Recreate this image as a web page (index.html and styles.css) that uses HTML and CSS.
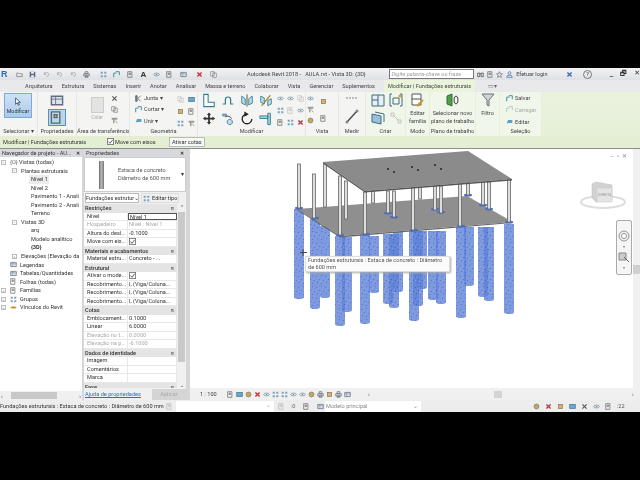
FILE: index.html
```html
<!DOCTYPE html>
<html lang="pt">
<head>
<meta charset="utf-8">
<title>Autodesk Revit 2018</title>
<link rel="stylesheet" href="styles.css">
</head>
<body>
<svg class="defs" width="0" height="0">
  <defs>
    <symbol id="s-save" viewBox="0 0 10 10"><path d="M1 1h7l1 1v7H1z" fill="#5b6a80"/><path d="M3 1h4v3H3zM3 6h4v3H3z" fill="#eef"/></symbol>
    <symbol id="s-open" viewBox="0 0 10 10"><path d="M1 3h3l1 1h4v4H1z" fill="none" stroke="#777" stroke-width="1"/></symbol>
    <symbol id="s-undo" viewBox="0 0 10 10"><path d="M2 5a3 3 0 1 1 3 3M2 2v3h3" fill="none" stroke="#a0a0a0" stroke-width="1"/></symbol>
    <symbol id="s-print" viewBox="0 0 10 10"><path d="M1 4h8v3H1zM3 1h4v3H3zM3 7h4v2H3z" fill="none" stroke="#5b6470" stroke-width="1"/></symbol>
    <symbol id="s-x" viewBox="0 0 10 10"><path d="M2 2l6 6M8 2L2 8" stroke="#555" stroke-width="1.6"/></symbol>
    <symbol id="s-xred" viewBox="0 0 10 10"><path d="M2 2l6 6M8 2L2 8" stroke="#c8303a" stroke-width="2"/></symbol>
    <symbol id="s-xblue" viewBox="0 0 10 10"><path d="M2 2l6 6M8 2L2 8" stroke="#3f6fb0" stroke-width="2"/></symbol>
    <symbol id="s-copy" viewBox="0 0 10 10"><path d="M1 1h5v6H1zM4 3h5v6H4z" fill="#fff" stroke="#777"/></symbol>
    <symbol id="s-brush" viewBox="0 0 10 10"><path d="M1 1h8v3H5v5H3V4H1z" fill="#9a9a9a"/><path d="M6 5l3 4" stroke="#b48a3c"/></symbol>
    <symbol id="s-join" viewBox="0 0 10 10"><path d="M1 1h2v8H1zM4 5l4-4M4 5l4 4" stroke="#566" fill="#789" stroke-width="1.2"/></symbol>
    <symbol id="s-cut" viewBox="0 0 10 10"><path d="M1 9V3h4M4 1h5v5" fill="none" stroke="#3f8f9c" stroke-width="1.4"/></symbol>
    <symbol id="s-unite" viewBox="0 0 10 10"><path d="M1 8l2-5h6v4H4z" fill="#57a0c8"/></symbol>
    <symbol id="s-blue" viewBox="0 0 10 10"><rect x="1" y="2" width="8" height="6" fill="#6fa6c8" stroke="#3e7696"/></symbol>
    <symbol id="s-tan" viewBox="0 0 10 10"><rect x="2" y="2" width="6" height="6" fill="#d2b27c" stroke="#8c7548"/></symbol>
    <symbol id="s-grid" viewBox="0 0 10 10"><path d="M1 1h3v3H1zM6 1h3v3H6zM1 6h3v3H1zM6 6h3v3H6z" fill="#7fa2bc"/></symbol>
    <symbol id="s-eye" viewBox="0 0 10 10"><ellipse cx="5" cy="5" rx="4" ry="2" fill="none" stroke="#6f8796"/><circle cx="5" cy="5" r="1" fill="#6f8796"/></symbol>
    <symbol id="s-align" viewBox="0 0 16 16"><path d="M2 1v14h12v-5H7V1z" fill="#fff" stroke="#2f7f93" stroke-width="1.2"/></symbol>
    <symbol id="s-off" viewBox="0 0 16 16"><path d="M2 12h3V7a3 3 0 0 1 6 0v5h3" fill="none" stroke="#2f7f93" stroke-width="1.4"/></symbol>
    <symbol id="s-mirror" viewBox="0 0 16 16"><path d="M8 1v14" stroke="#444"/><path d="M2 3l4 3v7l-4-2zM14 3l-4 3v7l4-2z" fill="#c4dde6" stroke="#2f7f93"/></symbol>
    <symbol id="s-mirror2" viewBox="0 0 16 16"><path d="M3 14L13 2" stroke="#b68a2e" stroke-width="1.4"/><path d="M2 3l4 2v7l-4-2zM14 6l-4 2v6l4-2z" fill="#c4dde6" stroke="#2f7f93"/></symbol>
    <symbol id="s-move" viewBox="0 0 16 16"><path d="M8 1l2.4 3H9v3h3V5.600L15 8l-3 2.400V9H9v3h1.400L8 15l-2.400-3H7V9H4v1.400L1 8l3-2.400V7h3V4H5.600z" fill="#333"/></symbol>
    <symbol id="s-copy2" viewBox="0 0 16 16"><path d="M2 3h4v2H2zM10 9a3 3 0 1 0 .1 0" fill="#c4dde6" stroke="#2f7f93"/><path d="M5 6a5 5 0 0 1 7 2" fill="none" stroke="#333"/></symbol>
    <symbol id="s-rot" viewBox="0 0 16 16"><path d="M8 3a5.500 5.500 0 1 0 5.500 5.500" fill="none" stroke="#222" stroke-width="1.500"/><path d="M5 0l5 3-5 3z" fill="#222"/></symbol>
    <symbol id="s-trim" viewBox="0 0 16 16"><path d="M1 5h9v3H1zM10 2h3v13h-3z" fill="#a8cfdc" stroke="#2f7f93"/></symbol>
    <symbol id="s-folder" viewBox="0 0 10 10"><path d="M1 2h8v6H1z" fill="#dfe3e8" stroke="#5f6f82"/><path d="M1 4h8M4 2v6" stroke="#5f6f82" stroke-width=".6"/></symbol>
    <symbol id="s-fam" viewBox="0 0 10 10"><path d="M1 1h6v8H1zM3 3h2v2H3z" fill="none" stroke="#666"/></symbol>
    <symbol id="s-chain" viewBox="0 0 14 10"><rect x="1" y="3" width="12" height="4" rx="2" fill="#d9a23a"/><path d="M5 5h4" stroke="#7a5b12"/></symbol>
    <symbol id="s-view" viewBox="0 0 10 10"><circle cx="5" cy="5" r="3.500" fill="#c9a850" stroke="#777"/></symbol>
    <symbol id="s-bino" viewBox="0 0 10 10"><path d="M1 8V3h3v5zM6 8V3h3v5zM4 4h2" fill="none" stroke="#444"/></symbol>
    <symbol id="s-star" viewBox="0 0 10 10"><path d="M5 1l1.200 2.800 3 .3-2.300 2 .7 3L5 7.500 2.400 9.100l.7-3-2.300-2 3-.3z" fill="none" stroke="#555" stroke-width=".8"/></symbol>
    <symbol id="s-user" viewBox="0 0 10 10"><circle cx="5" cy="3" r="2" fill="none" stroke="#3f6fb0"/><path d="M1 9a4 3 0 0 1 8 0z" fill="none" stroke="#3f6fb0"/></symbol>
    <symbol id="s-check" viewBox="0 0 8 8"><rect x=".5" y=".5" width="7" height="7" fill="#fff" stroke="#777"/><path d="M1.500 4l2 2 3-4" fill="none" stroke="#444"/></symbol>
    <pattern id="speck" width="9" height="11" patternUnits="userSpaceOnUse">
      <rect width="9" height="11" fill="#5d81d8" fill-opacity=".8"/>
      <path d="M1 2h1v1H1zM6 1h1v1H6zM4 5h1v1H4zM8 6h1v1H8zM2 8h1v1H2zM6 9h1v1H6z" fill="#2e3f74" fill-opacity=".4"/>
      <path d="M3 3h1v1H3zM7 4h1v1H7zM1 6h1v1H1zM5 7h1v1H5z" fill="#a9bdec" fill-opacity=".35"/>
    </pattern>
  </defs>
</svg>

<div class="bar-black"></div>

<div class="app">
  <header class="titlebar">
    <span class="logo">R</span>
    <div class="qat">
      <svg class="i"><use href="#s-open"/></svg>
      <svg class="i"><use href="#s-save"/></svg>
      <svg class="i"><use href="#s-undo"/></svg>
      <svg class="i"><use href="#s-undo"/></svg>
      <svg class="i"><use href="#s-undo"/></svg>
      <svg class="i"><use href="#s-print"/></svg>
      <svg class="i gap-l"><use href="#s-grid"/></svg>
      <svg class="i"><use href="#s-cut"/></svg>
      <svg class="i"><use href="#s-fam"/></svg>
      <span class="qat-a">A</span>
      <svg class="i"><use href="#s-eye"/></svg>
      <svg class="i"><use href="#s-fam"/></svg>
      <svg class="i"><use href="#s-folder"/></svg>
      <svg class="i gap-l"><use href="#s-xred"/></svg>
      <svg class="i"><use href="#s-copy"/></svg>
    </div>
    <span class="doc-title">Autodesk Revit 2018 -&nbsp;&nbsp;&nbsp;AULA.rvt - Vista 3D: {3D}</span>
    <span class="search">Digite palavra-chave ou frase</span>
    <div class="title-tools">
      <svg class="i"><use href="#s-bino"/></svg>
      <svg class="i"><use href="#s-fam"/></svg>
      <svg class="i"><use href="#s-star"/></svg>
      <svg class="i"><use href="#s-user"/></svg>
      <span class="login">Efetuar login</span>
      <svg class="i"><use href="#s-xblue"/></svg>
      <span class="help">?</span>
    </div>
    <div class="win">
      <span>_</span><span>&#x1F5D7;</span><span>&#x2715;</span>
    </div>
  </header>

  <nav class="tabs">
    <span class="tab t-arq">Arquitetura</span>
    <span class="tab">Estrutura</span>
    <span class="tab">Sistemas</span>
    <span class="tab">Inserir</span>
    <span class="tab">Anotar</span>
    <span class="tab">Analisar</span>
    <span class="tab">Massa e terreno</span>
    <span class="tab">Colaborar</span>
    <span class="tab">Vista</span>
    <span class="tab">Gerenciar</span>
    <span class="tab">Suplementos</span>
    <span class="tab active">Modificar | Fundações estruturais</span>
    <span class="tab-tool">&#x25AD;&#x25BE;</span>
  </nav>

  <section class="ribbon">
    <div class="panel w-sel">
      <div class="body"><div class="modbtn"><svg class="cursor-i" viewBox="0 0 10 12"><path d="M2 1v8l2-2 1.500 3 1.200-.6L5.200 6.500H8z" fill="#fff" stroke="#345"/></svg><span>Modificar</span></div></div>
      <div class="plabel">Selecionar ▾</div>
    </div>
    <div class="panel w-prop">
      <div class="body col"><svg class="i14"><use href="#s-folder"/></svg><div class="propbtn"><svg class="i14"><use href="#s-fam"/></svg></div></div>
      <div class="plabel">Propriedades</div>
    </div>
    <div class="panel w-clip">
      <div class="body row">
        <div class="colar"><span class="paste"></span><span>Colar</span></div>
        <div class="col3"><svg class="i"><use href="#s-x"/></svg><svg class="i"><use href="#s-copy"/></svg><svg class="i"><use href="#s-brush"/></svg></div>
      </div>
      <div class="plabel">Área de transferência</div>
    </div>
    <div class="panel w-geo">
      <div class="body row">
        <div class="col3">
          <span class="sm"><svg class="i"><use href="#s-join"/></svg>Junta ▾</span>
          <span class="sm"><svg class="i"><use href="#s-cut"/></svg>Cortar ▾</span>
          <span class="sm"><svg class="i"><use href="#s-unite"/></svg>Unir ▾</span>
        </div>
        <div class="grid2">
          <svg class="i dim"><use href="#s-copy"/></svg><svg class="i"><use href="#s-blue"/></svg>
          <svg class="i"><use href="#s-tan"/></svg><svg class="i"><use href="#s-fam"/></svg>
          <svg class="i"><use href="#s-grid"/></svg><svg class="i"><use href="#s-brush"/></svg>
        </div>
      </div>
      <div class="plabel">Geometria</div>
    </div>
    <div class="panel w-mod">
      <div class="body row">
        <div class="grid4">
          <svg class="i14"><use href="#s-align"/></svg><svg class="i14"><use href="#s-off"/></svg><svg class="i14"><use href="#s-mirror"/></svg><svg class="i14"><use href="#s-mirror2"/></svg>
          <svg class="i14"><use href="#s-move"/></svg><svg class="i14"><use href="#s-copy2"/></svg><svg class="i14"><use href="#s-rot"/></svg><svg class="i14"><use href="#s-trim"/></svg>
        </div>
        <div class="grid3">
          <svg class="i"><use href="#s-eye"/></svg><svg class="i"><use href="#s-eye"/></svg><svg class="i dim"><use href="#s-copy"/></svg>
          <svg class="i"><use href="#s-grid"/></svg><svg class="i dim"><use href="#s-fam"/></svg><svg class="i"><use href="#s-eye"/></svg>
          <svg class="i"><use href="#s-fam"/></svg><svg class="i"><use href="#s-grid"/></svg><svg class="i"><use href="#s-xred"/></svg>
        </div>
      </div>
      <div class="plabel">Modificar</div>
    </div>
    <div class="panel w-vis">
      <div class="body row">
        <div class="col3"><svg class="i"><use href="#s-eye"/></svg><svg class="i"><use href="#s-brush"/></svg><svg class="i"><use href="#s-view"/></svg></div>
        <div class="col3"><svg class="i"><use href="#s-tan"/></svg><svg class="i"><use href="#s-fam"/></svg></div>
      </div>
      <div class="plabel">Vista</div>
    </div>
    <div class="panel w-med">
      <div class="body col">
        <svg class="i14"><path d="M1 5h12" stroke="#888" stroke-dasharray="2 1"/></svg>
        <svg class="i14"><path d="M2 13L12 2" stroke="#444" stroke-width="1.300"/><circle cx="12" cy="2" r="1.500" fill="#888"/><circle cx="2" cy="13" r="1.500" fill="#888"/></svg>
      </div>
      <div class="plabel">Medir</div>
    </div>
    <div class="panel w-cri ctx">
      <div class="body criar">
        <svg class="i14"><path d="M1 2h12v11H1zM7 2v11M1 7h6" fill="#e8eef2" stroke="#3f6b85"/></svg>
        <svg class="i14"><path d="M3 1H1v12h2M11 1h2v12h-2M4 5h6v6H4z" fill="none" stroke="#3f6b85"/><circle cx="11" cy="3" r="1.600" fill="#d99a26"/></svg>
        <svg class="i14"><path d="M1 3l9 2v8L1 11z" fill="#9cc0d8" stroke="#3f6b85"/><path d="M4 1l9 2v8" fill="none" stroke="#3f6b85"/></svg>
        <svg class="i14 dim"><path d="M2 2h3v3H2zM9 9h3v3H9zM5 5l4 4" fill="none" stroke="#777"/></svg>
      </div>
      <div class="plabel">Criar</div>
    </div>
    <div class="panel w-modo ctx">
      <div class="body tall"><svg class="i14"><path d="M1 1h9v11H1zM1 6h9" fill="#fff" stroke="#555"/><path d="M6 13l6-6" stroke="#c89a30" stroke-width="2"/></svg><span>Editar<br>família</span></div>
      <div class="plabel">Modo</div>
    </div>
    <div class="panel w-pl ctx">
      <div class="body tall"><svg class="i14 wide"><path d="M2 3l5-2v12l-5-2z" fill="#4fa04a" stroke="#2f7030"/><ellipse cx="11" cy="7" rx="2" ry="4" fill="none" stroke="#444"/></svg><span>Selecionar novo<br>plano de trabalho</span></div>
      <div class="plabel">Plano de trabalho</div>
    </div>
    <div class="panel w-fil ctx">
      <div class="body tall"><svg class="i14"><path d="M1 1h12L8 7v6l-2-1V7z" fill="#cfd4d8" stroke="#6d7378"/></svg><span>Filtro</span></div>
      <div class="plabel">&nbsp;</div>
    </div>
    <div class="panel w-sln ctx">
      <div class="body col3 seln">
        <span class="sm"><svg class="i"><use href="#s-cut"/></svg>Salvar</span>
        <span class="sm dimt"><svg class="i dim"><use href="#s-cut"/></svg>Carregar</span>
        <span class="sm"><svg class="i"><use href="#s-unite"/></svg>Editar</span>
      </div>
      <div class="plabel">Seleção</div>
    </div>
  </section>

  <div class="options">
    <span class="ctx-name">Modificar | Fundações estruturais</span>
    <span class="opt-check"><svg class="chk"><use href="#s-check"/></svg>Move com eixos</span>
    <span class="opt-btn">Ativar cotas</span>
  </div>

  <main class="work">
    <aside class="browser">
      <div class="dock-head"><span>Navegador de projeto - AU...</span><b>✕</b></div>
      <ul class="tree">
        <li class="l0"><i class="tw">−</i><em class="ico-o">{O}</em>Vistas (todas)</li>
        <li class="l1"><i class="tw">−</i>Plantas estruturais</li>
        <li class="l2 sel">Nível 1</li>
        <li class="l2">Nível 2</li>
        <li class="l2">Pavimento 1 - Anali</li>
        <li class="l2">Pavimento 2 - Anali</li>
        <li class="l2">Terreno</li>
        <li class="l1"><i class="tw">−</i>Vistas 3D</li>
        <li class="l2">arq</li>
        <li class="l2">Modelo analítico</li>
        <li class="l2 cur">{3D}</li>
        <li class="l1"><i class="tw">+</i>Elevações (Elevação da</li>
        <li class="l0i"><svg class="i"><use href="#s-folder"/></svg>Legendas</li>
        <li class="l0i"><svg class="i"><use href="#s-folder"/></svg>Tabelas/Quantidades</li>
        <li class="l0i"><svg class="i"><use href="#s-fam"/></svg>Folhas (todas)</li>
        <li class="l0"><i class="tw">+</i><svg class="i"><use href="#s-fam"/></svg>Famílias</li>
        <li class="l0"><i class="tw">+</i><svg class="i"><use href="#s-grid"/></svg>Grupos</li>
        <li class="l0"><i class="tw">+</i><svg class="i"><use href="#s-chain"/></svg>Vínculos do Revit</li>
      </ul>
      <div class="hscroll"><span>‹</span><i></i><span>›</span></div>
    </aside>

    <aside class="props">
      <div class="dock-head"><span>Propriedades</span><b>✕</b></div>
      <div class="type">
        <div class="type-pic"><span></span></div>
        <div class="type-name">Estaca de concreto<br>Diâmetro de 600 mm</div>
        <span class="type-arrow">▾</span>
      </div>
      <div class="type-sel">
        <span class="combo">Fundações estrutur<i>⌄</i></span>
        <span class="edit"><svg class="i"><use href="#s-grid"/></svg>Editar tipo</span>
      </div>
      <div class="prop-wrap">
        <div class="prop-table">
          <div class="grp">Restrições<b>≈</b></div>
          <div class="pr"><span>Nível</span><span class="edit-cell">Nível 1</span></div>
          <div class="pr off"><span>Hospedeiro</span><span>Nível : Nível 1</span></div>
          <div class="pr"><span>Altura do desl...</span><span>-0.1000</span></div>
          <div class="pr"><span>Move com eix...</span><span><svg class="chk"><use href="#s-check"/></svg></span></div>
          <div class="grp">Materiais e acabamentos<b>≈</b></div>
          <div class="pr"><span>Material estru...</span><span>Concreto - ...</span></div>
          <div class="grp">Estrutural<b>≈</b></div>
          <div class="pr"><span>Ativar o mode...</span><span><svg class="chk"><use href="#s-check"/></svg></span></div>
          <div class="pr"><span>Recobrimento...</span><span>I, (Viga/Coluna...</span></div>
          <div class="pr"><span>Recobrimento...</span><span>I, (Viga/Coluna...</span></div>
          <div class="pr"><span>Recobrimento...</span><span>I, (Viga/Coluna...</span></div>
          <div class="grp">Cotas<b>≈</b></div>
          <div class="pr"><span>Emblocament...</span><span>0.1000</span></div>
          <div class="pr"><span>Linear</span><span>6.0000</span></div>
          <div class="pr off"><span>Elevação no t...</span><span>0.0000</span></div>
          <div class="pr off"><span>Elevação na p...</span><span>-6.1000</span></div>
          <div class="grp">Dados de identidade<b>≈</b></div>
          <div class="pr"><span>Imagem</span><span></span></div>
          <div class="pr"><span>Comentários</span><span></span></div>
          <div class="pr"><span>Marca</span><span></span></div>
          <div class="grp">Fase<b>≈</b></div>
        </div>
        <div class="vscroll"><span>⌃</span><i></i><span>⌄</span></div>
      </div>
      <div class="prop-foot"><a>Ajuda de propriedades</a><span class="apply">Aplicar</span></div>
    </aside>

    <section class="view">
      <div class="canvas">
        <svg class="model" viewBox="190 150 450 238">
          <g class="piles">
            <path fill="url(#speck)" d="M464 228h10v57a5 2 0 0 1-10 0z"/>
            <path fill="url(#speck)" d="M478 228h10v68a5 2 0 0 1-10 0z"/>
            <path fill="url(#speck)" d="M484 228h10v72a5 2 0 0 1-10 0z"/>
            <path fill="url(#speck)" d="M428 232h10v67a5 2 0 0 1-10 0z"/>
            <path fill="url(#speck)" d="M436 232h10v71a5 2 0 0 1-10 0z"/>
            <path fill="url(#speck)" d="M417 232h10v56a5 2 0 0 1-10 0z"/>
            <path fill="url(#speck)" d="M393 233h10v58a5 2 0 0 1-10 0z"/>
            <path fill="url(#speck)" d="M383 235h10v68a5 2 0 0 1-10 0z"/>
            <path fill="url(#speck)" d="M389 235h10v72a5 2 0 0 1-10 0z"/>
            <path fill="url(#speck)" d="M369 237h10v55a5 2 0 0 1-10 0z"/>
            <path fill="url(#speck)" d="M342 238h10v73a5 2 0 0 1-10 0z"/>
            <path fill="url(#speck)" d="M320 227h10v70a5 2 0 0 1-10 0z"/>
            <path fill="url(#speck)" d="M310 220h10v88a5 2 0 0 1-10 0z"/>
            <path fill="url(#speck)" d="M294 210h10v88a5 2 0 0 1-10 0z"/>
            <path fill="url(#speck)" d="M335 237h10v88a5 2 0 0 1-10 0z"/>
            <path fill="url(#speck)" d="M360 236h10v87a5 2 0 0 1-10 0z"/>
            <path fill="url(#speck)" d="M413 232h10v73a5 2 0 0 1-10 0z"/>
            <path fill="url(#speck)" d="M409 232h10v88a5 2 0 0 1-10 0z"/>
            <path fill="url(#speck)" d="M456 228h10v89a5 2 0 0 1-10 0z"/>
            <path fill="url(#speck)" d="M504 225h10v88a5 2 0 0 1-10 0z"/>
          </g>
          <path class="slab" d="M297 210L467 197L513 223L340 237Z"/>
          <path class="slab-edge" d="M297 210L340 237L513 223V224L340 238.500L297 211Z"/>
          <g class="bases">
            <ellipse cx="299" cy="209" rx="4" ry="1.500"/><ellipse cx="315" cy="219" rx="4" ry="1.500"/>
            <ellipse cx="340" cy="236" rx="4" ry="1.500"/><ellipse cx="366" cy="235" rx="4" ry="1.500"/>
            <ellipse cx="388" cy="214" rx="4" ry="1.500"/><ellipse cx="394" cy="218" rx="4" ry="1.500"/>
            <ellipse cx="435" cy="210" rx="4" ry="1.500"/><ellipse cx="441" cy="213" rx="4" ry="1.500"/>
            <ellipse cx="414" cy="231" rx="4" ry="1.500"/><ellipse cx="461" cy="227" rx="4" ry="1.500"/>
            <ellipse cx="468" cy="196" rx="4" ry="1.500"/><ellipse cx="483" cy="206" rx="4" ry="1.500"/>
            <ellipse cx="489" cy="210" rx="4" ry="1.500"/><ellipse cx="509" cy="223" rx="4" ry="1.500"/>
          </g>
          <g class="cols">
            <rect x="297.500" y="165" width="3" height="44"/>
            <rect x="312.500" y="175" width="3" height="44"/>
            <rect x="323.500" y="165" width="3" height="43"/>
            <rect x="344.500" y="182" width="3" height="38"/>
            <rect x="371.500" y="192" width="3" height="12"/>
            <rect x="386.500" y="192" width="3" height="22"/>
            <rect x="392.500" y="192" width="3" height="26"/>
            <rect x="418.500" y="188" width="3" height="12"/>
            <rect x="433.500" y="187" width="3" height="24"/>
            <rect x="439.500" y="187" width="3" height="27"/>
            <rect x="466.500" y="183" width="3" height="13"/>
            <rect x="481.500" y="183" width="3" height="23"/>
            <rect x="487.500" y="183" width="3" height="27"/>
            <rect x="338.500" y="177" width="3" height="59"/>
            <rect x="363.500" y="193" width="3" height="42"/>
            <rect x="411.500" y="188" width="3" height="43"/>
            <rect x="458.500" y="183" width="3" height="44"/>
            <rect x="507.500" y="180" width="3" height="43"/>
          </g>
          <path class="slab-top" d="M323 163L468 152L512 180L365 192Z"/>
          <path class="slab-thick" d="M323 163L365 192L512 180V181.500L365 193.500L323 164.500Z"/>
          <g class="holes">
            <circle cx="388" cy="170" r="1"/><circle cx="412" cy="168" r="1"/><circle cx="435" cy="166" r="1"/>
            <circle cx="394" cy="173" r="1"/><circle cx="418" cy="171" r="1"/><circle cx="441" cy="170" r="1"/>
          </g>
          <path class="curs" d="M303 250v7M300 253.500h7" />
          <g class="cube">
            <ellipse cx="603" cy="203" rx="22" ry="6"/>
            <path class="cube-l" d="M592 185L596 183L612 186V201L596 203L592 199Z"/>
            <path class="cube-f" d="M597 189H612V203H597Z"/>
          </g>
        </svg>
        <div class="vctrl"><span>–</span><span>▫</span><span>✕</span></div>
        <div class="tip">Fundações estruturais : Estaca de concreto : Diâmetro de 600 mm</div>
        <div class="cube-text">DIREITA</div>
        <div class="navbar">
          <svg class="nav-w" viewBox="0 0 12 12"><circle cx="6" cy="6" r="5" fill="#eee" stroke="#999"/><circle cx="6" cy="6" r="2.500" fill="#fff" stroke="#999"/></svg>
          <i>▾</i>
          <svg class="nav-w" viewBox="0 0 12 12"><path d="M1 2h7v7H1z" fill="#ccc" stroke="#888"/><path d="M6 6l5 5" stroke="#666"/></svg>
          <i>▾</i>
        </div>
        <div class="rscroll"><i></i></div>
      </div>
      <div class="viewbar">
        <span class="scale">1 : 100</span>
        <div class="vtools">
          <svg class="i"><use href="#s-fam"/></svg><svg class="i"><use href="#s-blue"/></svg><svg class="i"><use href="#s-view"/></svg><svg class="i"><use href="#s-xred"/></svg><svg class="i"><use href="#s-eye"/></svg><svg class="i"><use href="#s-grid"/></svg><svg class="i"><use href="#s-grid"/></svg><svg class="i"><use href="#s-eye"/></svg><svg class="i"><use href="#s-eye"/></svg><svg class="i"><use href="#s-view"/></svg><svg class="i"><use href="#s-print"/></svg><svg class="i"><use href="#s-tan"/></svg><svg class="i"><use href="#s-print"/></svg><svg class="i"><use href="#s-folder"/></svg>
        </div>
        <span class="vs-l">‹</span>
        <div class="hs-track"><i></i></div>
        <span class="vs-r">›</span>
      </div>
    </section>
  </main>

  <footer class="status">
    <span class="st-text">Fundações estruturais : Estaca de concreto : Diâmetro de 600 mm</span>
    <svg class="i st-ico dim"><use href="#s-fam"/></svg>
    <span class="st-field"><i>⌄</i></span>
    <svg class="i st-filter dim"><use href="#s-fam"/></svg>
    <span class="st-zero">:0</span>
    <svg class="i st-a"><use href="#s-fam"/></svg>
    <svg class="i st-b"><use href="#s-folder"/></svg>
    <span class="st-model">Modelo principal<i>⌄</i></span>
    <div class="st-right">
      <svg class="i"><use href="#s-view"/></svg><svg class="i"><use href="#s-xred"/></svg><svg class="i"><use href="#s-tan"/></svg><svg class="i"><use href="#s-blue"/></svg><svg class="i"><use href="#s-x"/></svg><svg class="i"><use href="#s-eye"/></svg><svg class="i"><use href="#s-fam"/></svg><span>:22</span>
    </div>
  </footer>
</div>

<div class="bar-black"></div>
</body>
</html>
```
FILE: styles.css
```css
* { box-sizing: border-box; }
html, body { margin: 0; height: 480px; overflow: hidden; }
body {
  background: #000;
  font-family: Roboto, "Liberation Sans", sans-serif;
  font-size: 5.6px;
  color: #333;
  display: flex;
  flex-direction: column;
}
.defs { position: absolute; }
.bar-black { height: 68px; background: #000; flex: none; }
.app {
  height: 344px;
  flex: none;
  display: flex;
  flex-direction: column;
  background: #dcdcdc;
  filter: blur(.4px);
}
.i { width: 7px; height: 7px; flex: none; display: block; }
.i14 { width: 14px; height: 15px; flex: none; display: block; }
.dim { opacity: .4; }

/* title bar */
.titlebar {
  height: 12px;
  display: flex;
  align-items: center;
  background: linear-gradient(#f3f3f5, #dfe0e4);
  flex: none;
}
.logo { width: 8px; padding-left: 1px; font: bold 9px "Liberation Sans", sans-serif; color: #2c6fb0; }
.qat { display: flex; gap: 6.5px; align-items: center; margin-left: 8px; width: 232px; }
.gap-l { margin-left: 3px; }
.qat-a { font: bold 8px "Liberation Sans", sans-serif; color: #333; }
.doc-title { width: 141px; color: #444; white-space: nowrap; margin-right: 2px; }
.search {
  width: 85px;
  height: 10px;
  background: #fff;
  border: 1px solid #777;
  font-style: italic;
  color: #999;
  line-height: 8px;
  padding-left: 1px;
  white-space: nowrap;
}
.title-tools { display: flex; align-items: center; gap: 2.5px; margin-left: 3px; width: 125px; }
.login { width: 42px; color: #444; margin: 0 5px 0 1px; }
.help { width: 9px; height: 9px; border: 1px solid #777; border-radius: 50%; text-align: center; line-height: 7px; margin-left: 8px; }
.win { display: flex; gap: 7px; margin-left: 8px; font: bold 7px "DejaVu Sans", sans-serif; color: #333; }

/* tabs */
.tabs {
  height: 12px;
  flex: none;
  display: flex;
  align-items: center;
  gap: 9px;
  padding-left: 25px;
  background: #e9e9eb;
  color: #444;
  white-space: nowrap;
}
.tab.active {
  background: #eaf3dc;
  height: 12px;
  line-height: 12px;
  padding: 0 4px;
}
.tab-tool { color: #666; margin-left: 4px; }

/* ribbon */
.ribbon {
  height: 44px;
  flex: none;
  display: flex;
  background: linear-gradient(#eaf2dd, #e6f0d8);
}
.panel {
  display: flex;
  flex-direction: column;
  background: #f4f4f3;
  border-right: 1px solid #e6e6e6;
  overflow: hidden;
}
.panel.ctx { background: #f1f6ea; border-right-color: #e6efda; }
.w-sel { width: 38px; }
.w-prop { width: 39px; }
.w-clip { width: 53px; }
.w-geo { width: 68px; }
.w-mod { width: 108px; }
.w-vis { width: 33px; }
.w-med { width: 27px; }
.w-cri { width: 40px; }
.w-modo { width: 24px; }
.w-pl { width: 46px; }
.w-fil { width: 24px; }
.w-sln { width: 42px; }
.body { flex: 1; min-height: 0; padding-top: 1px; }
.plabel { height: 9px; line-height: 8px; text-align: center; color: #444; white-space: nowrap; flex: none; }
.row { display: flex; }
.col { display: flex; flex-direction: column; align-items: center; gap: 1px; }
.modbtn {
  width: 28px;
  height: 25px;
  margin: 0 0 0 4px;
  background: linear-gradient(#cfe2f5, #a9cbec);
  border: 1px solid #7ea9d6;
  display: flex;
  flex-direction: column;
  align-items: center;
  justify-content: space-between;
  padding: 3px 0;
  font-size: 5.4px;
}
.cursor-i { width: 8px; height: 10px; }
.propbtn { background: #b9d6f0; border: 1px solid #5a8fc6; width: 18px; height: 17px; display: flex; justify-content: center; align-items: center; }
.colar { width: 34px; display: flex; flex-direction: column; align-items: center; color: #aaa; padding: 4px 0 0 6px; gap: 1px; font-size: 5px; }
.paste { width: 13px; height: 16px; background: #e3e3e3; border: 1px solid #ccc; }
.col3 { display: flex; flex-direction: column; justify-content: space-around; height: 33px; gap: 1px; }
.sm { display: flex; align-items: center; gap: 2px; white-space: nowrap; color: #444; }
.w-geo .row { padding-left: 5px; gap: 8px; }
.w-geo .col3 { width: 34px; }
.grid2 { display: grid; grid-template-columns: 9px 9px; gap: 5px 2px; padding-top: 3px; }
.w-mod .row { padding: 1px 0 0 4px; gap: 4px; }
.grid4 { display: grid; grid-template-columns: repeat(4, 14px); gap: 1px 5px; width: 71px; }
.grid3 { display: grid; grid-template-columns: repeat(3, 7px); gap: 4px 3px; padding-top: 2px; }
.w-vis .row { padding-left: 1px; gap: 6px; }
.criar { display: grid; grid-template-columns: 14px 14px; gap: 1px 4px; padding: 1px 0 0 5px; }
.tall { display: flex; flex-direction: column; align-items: center; text-align: center; line-height: 7.500px; color: #444; white-space: nowrap; gap: 2px; }
.wide { width: 16px; }
.seln { padding: 1px 0 0 6px; }
.dimt { color: #aaa; }

/* options bar */
.options {
  height: 13px;
  flex: none;
  display: flex;
  align-items: center;
  background: #e3eed2;
  border-bottom: 1px solid #8d8d8d;
  padding: 0 0 1px 3px;
  color: #333;
}
.ctx-name { width: 104px; }
.opt-check { display: flex; align-items: center; gap: 1px; width: 58px; margin-right: 4px; }
.chk { width: 7px; height: 7px; display: block; }
.opt-btn { background: #f7f7f7; border: 1px solid #bbb; height: 10px; line-height: 8px; padding: 0 2px; }

/* work area */
.work { flex: 1; min-height: 0; display: flex; background: #d6d6d6; }
.browser { width: 82px; flex: none; display: flex; flex-direction: column; background: #fff; margin-right: 2px; }
.dock-head {
  height: 8px;
  flex: none;
  display: flex;
  justify-content: space-between;
  align-items: center;
  background: #d7d9dc;
  padding: 0 2px;
  color: #333;
  white-space: nowrap;
}
.dock-head b { font-size: 5px; }
.tree { flex: 1; min-height: 0; list-style: none; margin: 0; padding: 1px 0 0; overflow: hidden; white-space: nowrap; }
.tree li { height: 8.550px; line-height: 8.550px; display: flex; align-items: center; overflow: hidden; color: #333; }
.tw { width: 5px; height: 5px; border: 1px solid #bbb; font: normal 4px/3px "Liberation Sans", sans-serif; text-align: center; flex: none; color: #666; margin-right: 4px; }
.ico-o { font-style: normal; width: 9px; color: #666; }
.l0 { padding-left: 1px; }
.l0 .i { margin-right: 3px; }
.l1 { padding-left: 12px; }
.l2 { padding-left: 31px; }
.l2.sel { background: linear-gradient(90deg, #fff 29px, #ececec 29px, #ececec 49px, #fff 49px); }
.l2.cur { font-weight: bold; }
.l0i { padding-left: 10px; }
.l0i .i { margin-right: 3px; }
.hscroll { height: 9px; flex: none; background: #f0f0f0; display: flex; justify-content: space-between; align-items: center; padding: 0 1px; }
.hscroll i { width: 46px; height: 7px; background: #c8c8c8; margin-right: 14px; }

.props { width: 102px; flex: none; display: flex; flex-direction: column; background: #f0f0f0; margin-right: 4px; }
.type { height: 35px; flex: none; background: #fff; display: flex; align-items: center; position: relative; border: 1px solid #ccc; }
.type-pic { width: 32px; display: flex; justify-content: center; }
.type-pic span { width: 5px; height: 28px; background: linear-gradient(90deg, #666, #bbb 45%, #777); }
.type-name { line-height: 7.500px; color: #555; margin-left: 1px; }
.type-arrow { position: absolute; right: 1px; top: 13px; }
.type-sel { height: 12px; flex: none; display: flex; align-items: center; background: #f0f0f0; gap: 2px; padding-left: 1px; white-space: nowrap; }
.combo { width: 54px; height: 10px; background: #fff; border: 1px solid #bbb; line-height: 8px; display: flex; justify-content: space-between; overflow: hidden; }
.combo i { font-style: normal; }
.edit { display: flex; align-items: center; gap: 2px; border: 1px solid #ddd; height: 10px; padding: 0 1px; }
.prop-wrap { flex: 1; min-height: 0; display: flex; overflow: hidden; }
.prop-table { flex: 1; min-width: 0; overflow: hidden; background: #fff; }
.grp { height: 8.500px; line-height: 8px; background: #e4e4e4; padding: 0 3px 0 1px; display: flex; justify-content: space-between; color: #333; font-weight: 500; }
.pr { height: 8.500px; line-height: 7.600px; display: grid; grid-template-columns: 44px 1fr; border-bottom: 1px solid #e8e8e8; white-space: nowrap; }
.pr span { padding-left: 3px; overflow: hidden; border-right: 1px solid #e8e8e8; }
.pr span + span { padding-left: 1px; }
.pr.off { color: #aaa; }
.edit-cell { border: 1px solid #555 !important; line-height: 6px; }
.vscroll { width: 9px; flex: none; background: #f0f0f0; display: flex; flex-direction: column; align-items: center; justify-content: space-between; font-size: 5px; }
.vscroll i { flex: 1; width: 7px; background: #c9c9c9; margin: 2px 0 20px; }
.prop-foot { height: 12px; flex: none; display: flex; align-items: center; justify-content: space-between; background: #f0f0f0; padding-left: 1px; }
.prop-foot a { color: #2a6fbf; text-decoration: underline; }
.apply { width: 34px; height: 11px; line-height: 10px; text-align: center; background: #d4d4d4; color: #aaa; }

.view { flex: 1; min-width: 0; display: flex; flex-direction: column; }
.canvas { flex: 1; min-height: 0; position: relative; background: #fff; }
.model { display: block; width: 450px; height: 238px; }
.slab { fill: #8f8f8f; }
.slab-edge { fill: #666; }
.slab-top { fill: #8b8b8b; }
.slab-thick { fill: #555; }
.bases ellipse { fill: #4b6fc4; }
.cols rect { fill: #dcdcdc; stroke: #666; stroke-width: .8; }
.holes circle { fill: #222; }
.curs { stroke: #444; stroke-width: 1; }
.cube ellipse { fill: none; stroke: #ddd; stroke-width: 2; }
.cube-l { fill: #d2d2d2; stroke: #bbb; stroke-width: .5; }
.cube-f { fill: #e4e4e4; stroke: #c4c4c4; stroke-width: .5; }
.vctrl { position: absolute; top: 3px; left: 420px; display: flex; gap: 3px; font-size: 6px; color: #888; }
.tip {
  position: absolute;
  left: 115px;
  top: 107px;
  width: 145px;
  height: 16px;
  background: #fbfbfb;
  border: 1px solid #ddd;
  box-shadow: 1px 1px 2px #aaa;
  line-height: 7.200px;
  padding-left: 2px;
  color: #555;
}
.cube-text { position: absolute; left: 408px; top: 43px; font-size: 3.800px; color: #999; }
.navbar {
  position: absolute;
  left: 426px;
  top: 71px;
  width: 16px;
  height: 55px;
  background: #f5f5f5;
  border: 1px solid #aaa;
  border-radius: 2px;
  display: flex;
  flex-direction: column;
  align-items: center;
  padding-top: 9px;
  gap: 2px;
  font-size: 4px;
  color: #777;
}
.nav-w { width: 12px; height: 12px; }
.navbar i { font-style: normal; }
.rscroll { position: absolute; right: 0; top: 0; bottom: 0; width: 7px; background: #f0f0f0; }
.rscroll i { position: absolute; top: 116px; left: 0; width: 7px; height: 9px; background: #d0d0d0; }
.viewbar { height: 12px; flex: none; display: flex; align-items: center; background: #f0f0f0; padding-left: 10px; color: #444; }
.scale { width: 27px; }
.vtools { display: flex; width: 141px; flex: none; }
.vtools .i { margin-right: 2px; }
.vs-l { width: 6px; }
.hs-track { flex: 1; position: relative; height: 7px; }
.hs-track i { position: absolute; left: 120px; width: 8px; height: 7px; background: #d4d4d4; }
.vs-r { width: 8px; }

/* status */
.status { height: 12px; flex: none; display: flex; align-items: center; background: #ededed; white-space: nowrap; color: #333; }
.st-text { width: 166px; }
.st-ico { margin-right: 3px; }
.st-field { width: 98px; height: 11px; background: #fff; text-align: right; padding-right: 3px; color: #aaa; line-height: 9px; }
.st-field i { font-style: normal; }
.st-filter { margin-left: 4px; }
.st-zero { width: 10px; margin-left: 6px; color: #666; }
.st-a { margin-left: 2px; margin-right: 7px; }
.st-b { margin-right: 1px; }
.st-model { width: 96px; height: 11px; background: #fff; color: #888; line-height: 10px; padding: 0 3px 0 1px; display: flex; justify-content: space-between; }
.st-model i { font-style: normal; }
.st-right { display: flex; align-items: center; gap: 5px; margin-left: 112px; color: #555; }
```
